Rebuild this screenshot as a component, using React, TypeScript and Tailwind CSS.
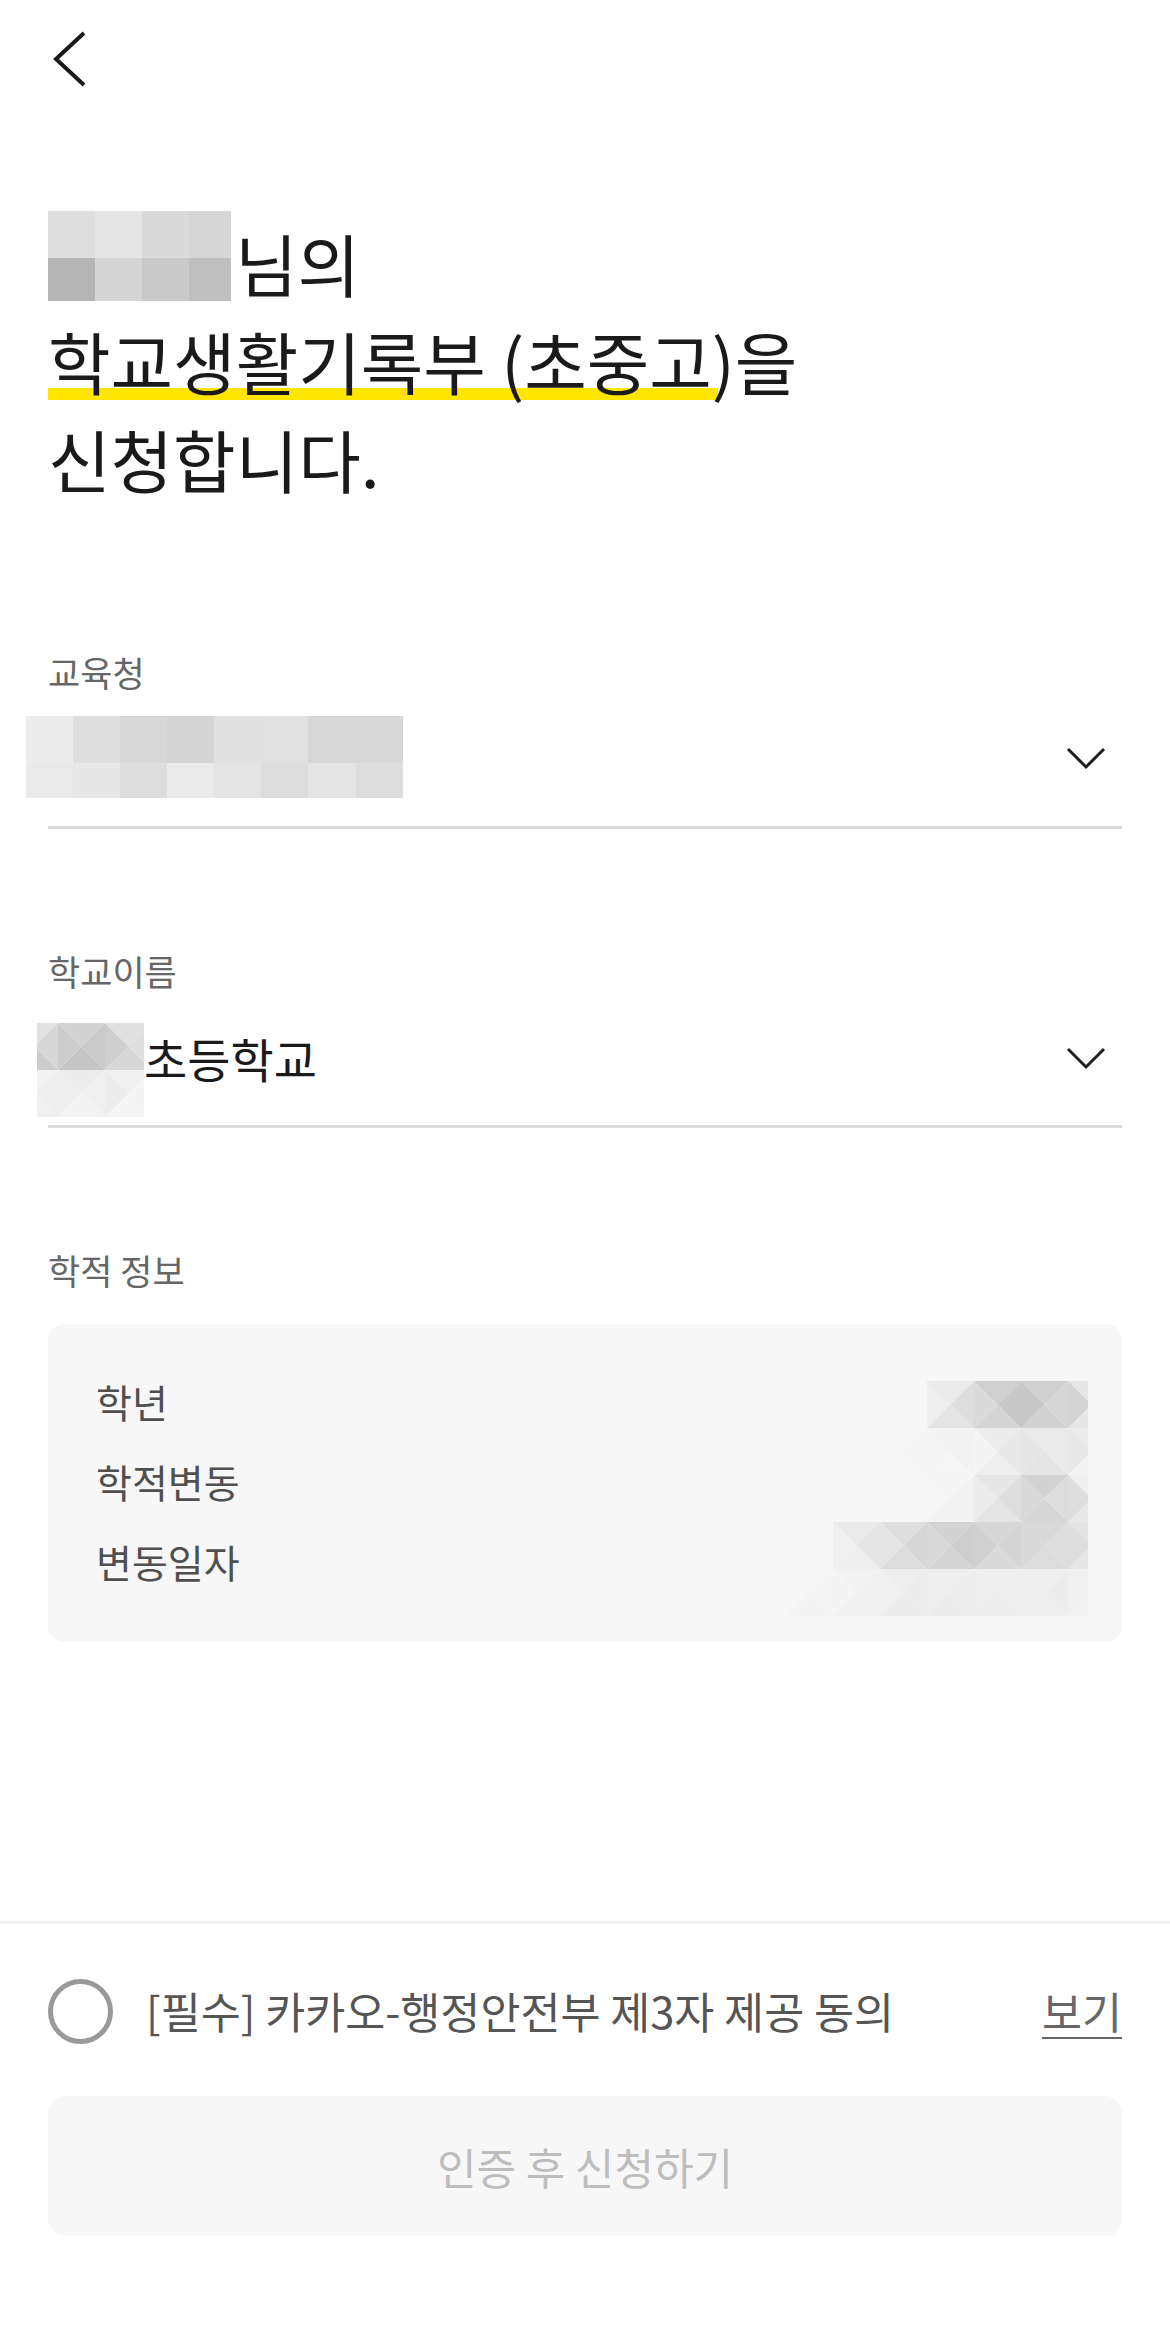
import React from "react";

type Tri = [number, number, number, number]; // top, right, bottom, left

type Cell = { x: number; y: number; g: Tri };

const g = (v: number) => `rgb(${v},${v},${v})`;

// blurred-out value mosaic (square blocks)
function Blocks({ cols, rows, colors }: { cols: number[]; rows: number[]; colors: number[][] }) {
  const w = cols.reduce((a, b) => a + b, 0);
  const h = rows.reduce((a, b) => a + b, 0);
  let y = 0;
  return (
    <svg width={w} height={h} className="block shrink-0">
      {rows.map((rh, r) => {
        let x = 0;
        const top = y;
        y += rh;
        return cols.map((cw, c) => {
          const left = x;
          x += cw;
          return <rect key={`${r}-${c}`} x={left} y={top} width={cw} height={rh} fill={g(colors[r][c])} />;
        });
      })}
    </svg>
  );
}

// blurred-out mosaic made of triangles (each 47px cell split by its diagonals)
function TriMosaic({ width, height, cells, s = 47 }: { width: number; height: number; cells: Cell[]; s?: number }) {
  const hs = s / 2;
  return (
    <svg width={width} height={height} className="block">
      {cells.map(({ x, y, g: t }, i) => {
        const cx = x + hs;
        const cy = y + hs;
        return (
          <g key={i}>
            <polygon points={`${x},${y} ${x + s},${y} ${cx},${cy}`} fill={g(t[0])} />
            <polygon points={`${x + s},${y} ${x + s},${y + s} ${cx},${cy}`} fill={g(t[1])} />
            <polygon points={`${x},${y + s} ${x + s},${y + s} ${cx},${cy}`} fill={g(t[2])} />
            <polygon points={`${x},${y} ${x},${y + s} ${cx},${cy}`} fill={g(t[3])} />
          </g>
        );
      })}
    </svg>
  );
}

const cardCells: Cell[] = [
  { x: 143, y: 0, g: [235, 222, 228, 238] },
  { x: 190, y: 0, g: [207, 200, 212, 218] },
  { x: 237, y: 0, g: [208, 214, 210, 200] },
  { x: 284, y: 0, g: [230, 232, 230, 212] },
  { x: 96, y: 47, g: [247, 245, 246, 247] },
  { x: 143, y: 47, g: [243, 242, 246, 245] },
  { x: 190, y: 47, g: [236, 232, 238, 244] },
  { x: 237, y: 47, g: [234, 234, 228, 230] },
  { x: 284, y: 47, g: [236, 240, 242, 232] },
  { x: 96, y: 94, g: [247, 246, 246, 247] },
  { x: 143, y: 94, g: [245, 242, 243, 246] },
  { x: 190, y: 94, g: [230, 222, 228, 236] },
  { x: 237, y: 94, g: [210, 220, 214, 216] },
  { x: 284, y: 94, g: [238, 236, 232, 222] },
  { x: 49, y: 141, g: [234, 230, 238, 240] },
  { x: 96, y: 141, g: [222, 214, 220, 228] },
  { x: 143, y: 141, g: [210, 206, 212, 216] },
  { x: 190, y: 141, g: [214, 212, 218, 208] },
  { x: 237, y: 141, g: [216, 222, 220, 216] },
  { x: 284, y: 141, g: [228, 234, 230, 222] },
  { x: 3, y: 188, g: [246, 245, 244, 247] },
  { x: 49, y: 188, g: [242, 240, 240, 244] },
  { x: 96, y: 188, g: [238, 236, 236, 240] },
  { x: 143, y: 188, g: [238, 237, 236, 238] },
  { x: 190, y: 188, g: [239, 238, 237, 238] },
  { x: 237, y: 188, g: [239, 236, 238, 238] },
  { x: 284, y: 188, g: [240, 242, 241, 240] },
];

const schoolCells: Cell[] = [
  { x: -26, y: 0, g: [226, 214, 204, 230] },
  { x: 21, y: 0, g: [210, 202, 198, 204] },
  { x: 68, y: 0, g: [224, 222, 214, 206] },
  { x: -26, y: 47, g: [242, 238, 240, 244] },
  { x: 21, y: 47, g: [236, 240, 243, 238] },
  { x: 68, y: 47, g: [240, 244, 245, 236] },
];

function ChevronDown() {
  return (
    <svg width="40" height="24" viewBox="0 0 40 24" fill="none" className="shrink-0">
      <polyline points="2,2 20,20 38,2" stroke="#1f1f1f" strokeWidth="3" />
    </svg>
  );
}

export default function App() {
  return (
    <div className="min-h-[2326px] w-[1170px] bg-white flex flex-col font-['Noto_Sans_CJK_KR',sans-serif] text-[#1a1a1a]">
      {/* back */}
      <div className="h-[214px] pt-[31px] pl-[53px]">
        <svg width="34" height="56" viewBox="0 0 34 56" fill="none">
          <polyline points="31,2 3,28 31,54" stroke="#1a1a1a" strokeWidth="4" />
        </svg>
      </div>

      {/* title */}
      <h1 className="px-[48px] text-[68px] leading-[98px] font-normal isolate">
        <div className="flex items-end h-[98px]">
          <div className="mb-[11px] mr-[4px]">
            <Blocks
              cols={[47, 47, 47, 42]}
              rows={[47, 43]}
              colors={[
                [222, 229, 218, 214],
                [181, 212, 201, 191],
              ]}
            />
          </div>
          <span>님의</span>
        </div>
        <div className="h-[98px]">
          <span className="relative">
            <span className="absolute left-0 right-[-6px] bottom-[10px] h-[12px] bg-[#FFE500] -z-10" />
            학교생활기록부 (초중고
          </span>
          )을
        </div>
        <div className="h-[98px]">신청합니다.</div>
      </h1>

      {/* 교육청 */}
      <div className="px-[48px] mt-[141px]">
        <div className="text-[35px] leading-[46px] text-[#666]">교육청</div>
        <div className="flex items-center pt-[21px] pb-[28px] border-b-[3px] border-[#dadada]">
          <div className="-ml-[22px]">
            <Blocks
              cols={[47, 47, 47, 47, 47, 47, 48, 47]}
              rows={[47, 35]}
              colors={[
                [236, 223, 215, 212, 224, 225, 215, 215],
                [233, 231, 221, 234, 228, 221, 228, 221],
              ]}
            />
          </div>
          <div className="ml-auto mr-[16px] mt-[4px]">
            <ChevronDown />
          </div>
        </div>
      </div>

      {/* 학교이름 */}
      <div className="px-[48px] mt-[119px]">
        <div className="text-[35px] leading-[46px] text-[#666]">학교이름</div>
        <div className="flex items-start pt-[29px] pb-[8px] border-b-[3px] border-[#dadada]">
          <div className="-ml-[11px]">
            <TriMosaic width={107} height={94} cells={schoolCells} />
          </div>
          <div className="text-[47px] leading-[60px] mt-[5px]">초등학교</div>
          <div className="ml-auto mr-[16px] mt-[24px]">
            <ChevronDown />
          </div>
        </div>
      </div>

      {/* 학적 정보 */}
      <div className="px-[48px] mt-[119px]">
        <div className="text-[35px] leading-[46px] text-[#666]">학적 정보</div>
        <div className="relative mt-[31px] h-[318px] rounded-[16px] bg-[#f7f7f7] pl-[48px] pt-[37px]">
          <ul className="text-[39px] leading-[80px] text-[#4f4f4f]">
            <li>학년</li>
            <li>학적변동</li>
            <li>변동일자</li>
          </ul>
          <div className="absolute right-[34px] top-[57px]">
            <TriMosaic width={304} height={235} cells={cardCells} />
          </div>
        </div>
      </div>

      {/* footer */}
      <div className="mt-auto border-t-[3px] border-[#f3f3f3] px-[48px] pt-[54px] pb-[90px]">
        <div className="flex items-center h-[66px]">
          <span className="w-[65px] h-[65px] rounded-full border-[5px] border-[#999] shrink-0" />
          <span className="ml-[33px] text-[43.5px] leading-[56px] text-[#555]">
            [필수] 카카오-행정안전부 제3자 제공 동의
          </span>
          <a className="ml-auto text-[43.5px] leading-[56px] text-[#666] underline underline-offset-[8px] decoration-[2px]">
            보기
          </a>
        </div>
        <button
          type="button"
          className="mt-[52px] w-full h-[140px] rounded-[18px] bg-[#f7f7f7] text-[43px] text-[#bdbdbd]"
        >
          인증 후 신청하기
        </button>
      </div>
    </div>
  );
}
